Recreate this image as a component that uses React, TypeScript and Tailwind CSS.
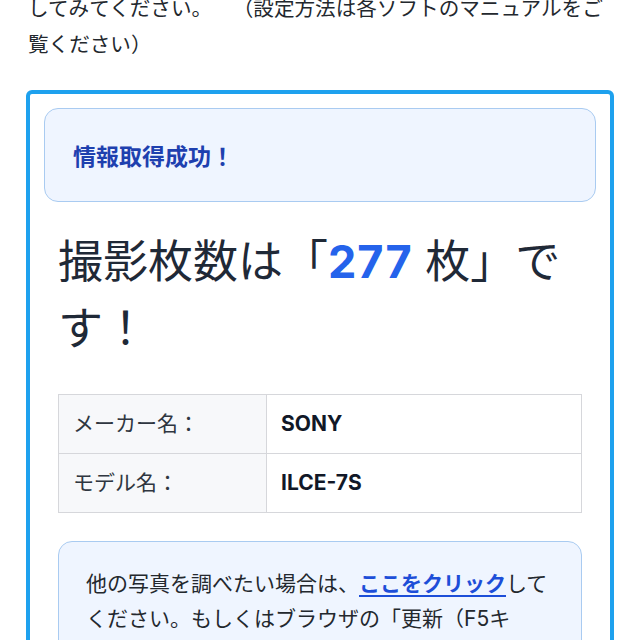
import React from "react";

const jp = { fontFamily: '"Noto Sans CJK JP", sans-serif' };
const mix = { fontFamily: 'Inter, "Noto Sans CJK JP", sans-serif' };

export default function App() {
  return (
    <div
      className="w-[640px] h-[640px] overflow-hidden bg-white text-[#1f2937] [text-spacing-trim:space-all]"
      style={jp}
    >
      <div className="px-[26px]">
        <p className="mt-[-11px] pl-[2px] text-[20.6px] leading-[36px] text-[#23282e] whitespace-nowrap">
          してみてください<span className="inline-block w-[1.5em] text-left">。</span>
          <span className="inline-block w-[1.5em] text-right">（</span>設定方法は各ソフトのマニュアルをご
          <br />
          覧ください）
        </p>

        <div className="mt-[29px] rounded-[6px] border-[4px] border-[#1ea1ee] p-[14px]">
          <div className="h-[94px] flex items-center rounded-[14px] border-[1.5px] border-[#a9cbf1] bg-[#eff5ff] px-[28px]">
            <span className="text-[23px] font-bold text-[#1e40af]">情報取得成功！</span>
          </div>

          <div className="px-[14px]">
            <h2 className="mt-[26px] text-[45px] leading-[67px] font-normal text-[#1f2937]" style={mix}>
              撮影枚数は「<span className="font-bold text-[#2563eb] tracking-[1px]">277</span> 枚」です！
            </h2>

            <div className="mt-[32px] border border-[#d6d7db] text-[21px]" style={mix}>
              <div className="grid grid-cols-[208px_1fr] border-b border-[#d6d7db]">
                <div className="h-[58px] flex items-center px-[14px] bg-[#f7f8fa] border-r border-[#d6d7db] text-[#2f3640]">
                  メーカー名：
                </div>
                <div className="h-[58px] flex items-center px-[14px] font-bold text-[#111827]">SONY</div>
              </div>
              <div className="grid grid-cols-[208px_1fr]">
                <div className="h-[58px] flex items-center px-[14px] bg-[#f7f8fa] border-r border-[#d6d7db] text-[#2f3640]">
                  モデル名：
                </div>
                <div className="h-[58px] flex items-center px-[14px] font-bold text-[#111827]">ILCE-7S</div>
              </div>
            </div>

            <div className="mt-[28px] rounded-[14px] border-[1.5px] border-[#a9cbf1] bg-[#eff5ff] px-[27px] pt-[24px] pb-[24px]">
              <p className="text-[21px] leading-[35px] text-[#23282e]" style={mix}>
                他の写真を調べたい場合は、
                <a href="#" className="font-bold text-[#1d4ed8] underline underline-offset-[4px] decoration-[1.5px]">
                  ここをクリック
                </a>
                してください。もしくはブラウザの「更新（F5キ
                <br />
                ー）」ボタンを押してください。
              </p>
            </div>
          </div>
        </div>
      </div>
    </div>
  );
}
